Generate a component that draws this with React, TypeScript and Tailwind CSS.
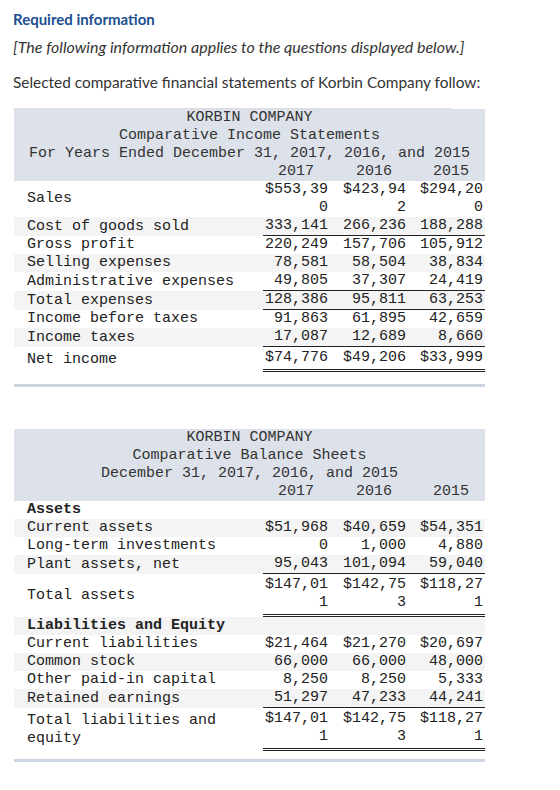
type Row = {
  label: string;
  values?: string[];
  bold?: boolean;
  shade?: boolean;
  line?: "single" | "double";
  pad?: boolean;
};

const incomeRows: Row[] = [
  { label: "Sales", values: ["$553,390", "$423,942", "$294,200"] },
  { label: "Cost of goods sold", values: ["333,141", "266,236", "188,288"], shade: true, line: "single" },
  { label: "Gross profit", values: ["220,249", "157,706", "105,912"] },
  { label: "Selling expenses", values: ["78,581", "58,504", "38,834"], shade: true },
  { label: "Administrative expenses", values: ["49,805", "37,307", "24,419"], line: "single" },
  { label: "Total expenses", values: ["128,386", "95,811", "63,253"], shade: true, line: "single" },
  { label: "Income before taxes", values: ["91,863", "61,895", "42,659"] },
  { label: "Income taxes", values: ["17,087", "12,689", "8,660"], shade: true, line: "single" },
  { label: "Net income", values: ["$74,776", "$49,206", "$33,999"], line: "double", pad: true },
];

const balanceRows: Row[] = [
  { label: "Assets", bold: true },
  { label: "Current assets", values: ["$51,968", "$40,659", "$54,351"], shade: true },
  { label: "Long-term investments", values: ["0", "1,000", "4,880"] },
  { label: "Plant assets, net", values: ["95,043", "101,094", "59,040"], shade: true, line: "single" },
  { label: "Total assets", values: ["$147,011", "$142,753", "$118,271"], line: "double", pad: true },
  { label: "Liabilities and Equity", bold: true, shade: true },
  { label: "Current liabilities", values: ["$21,464", "$21,270", "$20,697"] },
  { label: "Common stock", values: ["66,000", "66,000", "48,000"], shade: true },
  { label: "Other paid-in capital", values: ["8,250", "8,250", "5,333"] },
  { label: "Retained earnings", values: ["51,297", "47,233", "44,241"], shade: true, line: "single" },
  { label: "Total liabilities and equity", values: ["$147,011", "$142,753", "$118,271"], line: "double", pad: true },
];

function StatementRow({ row }: { row: Row }) {
  const lineClass =
    row.line === "single"
      ? "border-b border-[#222]"
      : row.line === "double"
        ? "border-b-[3px] border-double border-[#222]"
        : "";
  return (
    <div className={`grid grid-cols-[249px_222px] ${row.shade ? "bg-[#f4f4f4]" : ""}`}>
      <div className={`flex items-center pl-[13px] ${row.pad ? "pt-[2px] pb-[2px]" : ""} ${row.bold ? "font-bold" : ""}`}>
        {row.label}
      </div>
      <div className={`grid grid-cols-[67px_78px_77px] ${lineClass} ${row.pad ? "pt-[2px] pb-[2px]" : ""}`}>
        {(row.values ?? ["", "", ""]).map((v, i) => (
          <div key={i} className="flex justify-end pr-[2px]">
            <div className="w-[64px] text-right break-all">{v}</div>
          </div>
        ))}
      </div>
    </div>
  );
}

function Statement({ title, rows, gap }: { title: string[]; rows: Row[]; gap: string }) {
  return (
    <div className="ml-[14px] w-[471px] font-['Liberation_Mono',monospace] text-[15px] leading-[18px] text-[#222]">
      <div className="bg-[#dde2ea] text-[#333]">
        {title.map((t) => (
          <div key={t} className="text-center">{t}</div>
        ))}
        <div className="grid grid-cols-[249px_222px]">
          <div />
          <div className="grid grid-cols-[67px_78px_77px]">
            {["2017", "2016", "2015"].map((y) => (
              <div key={y} className="flex justify-end pr-[2px]">
                <div className="w-[64px] text-center">{y}</div>
              </div>
            ))}
          </div>
        </div>
      </div>
      {rows.map((r) => (
        <StatementRow key={r.label} row={r} />
      ))}
      <div className={gap} />
      <div className="h-[3px] bg-[#cdd5e2]" />
    </div>
  );
}

export default function App() {
  return (
    <div className="min-h-screen bg-white text-[#333]">
      <div className="px-[13px] pt-[9px] font-['Lato',sans-serif]">
        <h1 className="text-[15px] font-bold leading-[20px] text-[#1d4f91]">Required information</h1>
        <p className="mt-[8px] text-[16px] italic leading-[20px]">
          [The following information applies to the questions displayed below.]
        </p>
        <p className="mt-[15px] text-[15.4px] leading-[20px]">
          Selected comparative financial statements of Korbin Company follow:
        </p>
        <div className="mt-[16px] h-px w-[439px] bg-[#ddd]" />
      </div>

      <Statement
        title={["KORBIN COMPANY", "Comparative Income Statements", "For Years Ended December 31, 2017, 2016, and 2015"]}
        rows={incomeRows}
        gap="h-[12px]"
      />

      <div className="h-[42px]" />

      <Statement
        title={["KORBIN COMPANY", "Comparative Balance Sheets", "December 31, 2017, 2016, and 2015"]}
        rows={balanceRows}
        gap="h-[8px]"
      />
    </div>
  );
}
